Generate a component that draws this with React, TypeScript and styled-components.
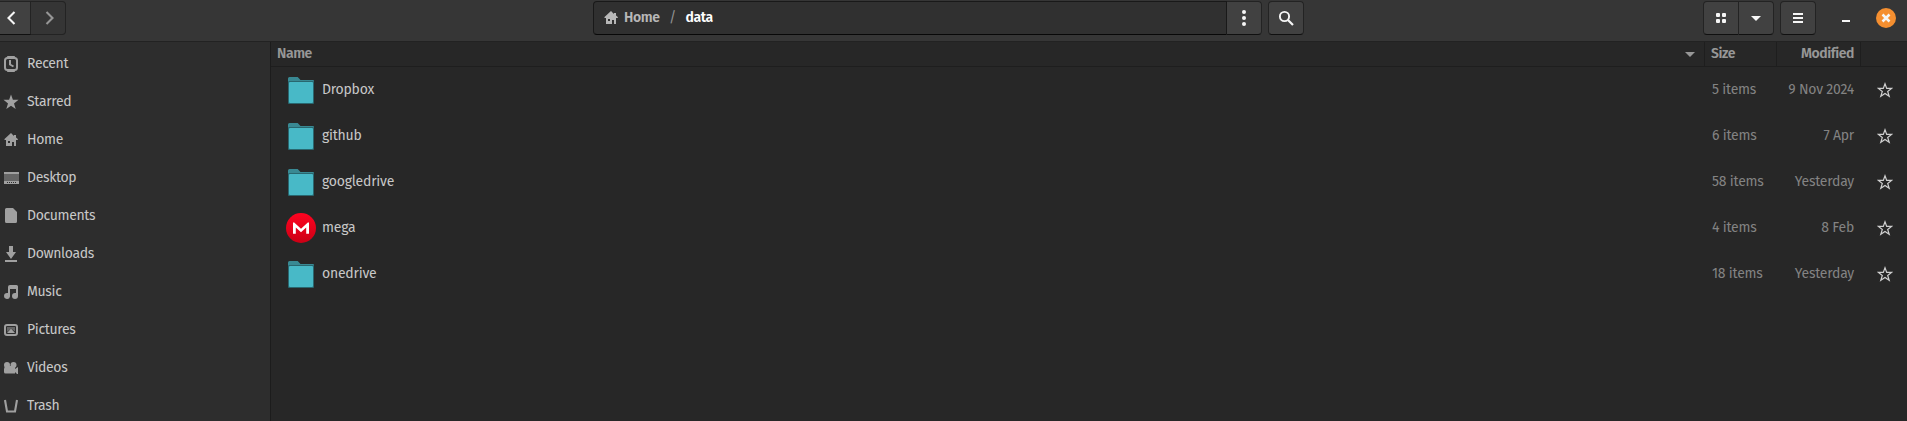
import React from 'react';
import styled, { createGlobalStyle } from 'styled-components';

const GlobalStyle = createGlobalStyle`
  *, *::before, *::after { box-sizing: border-box; }
  body {
    margin: 0;
    background: #272727;
    color: #c8c8c8;
    font-family: 'Fira Sans', 'Noto Sans', sans-serif;
    font-size: 14px;
    letter-spacing: -0.34px;
    line-height: 16px;
    overflow: hidden;
  }
`;

const Window = styled.div`
  display: flex;
  flex-direction: column;
  height: 100vh;
`;

const HeaderBar = styled.header`
  display: flex;
  justify-content: space-between;
  height: 42px;
  padding: 1px 11px 0 0;
  background: #363636;
  border-bottom: 1px solid #222222;
`;

const Group = styled.div<{ $gap?: number }>`
  display: flex;
  align-items: flex-start;
  gap: ${(p) => p.$gap ?? 0}px;
`;

const Button = styled.button<{ $join?: 'left' | 'right'; $flat?: boolean; $width?: number }>`
  display: flex;
  align-items: center;
  justify-content: center;
  width: ${(p) => p.$width ?? 36}px;
  height: 34px;
  padding: 0;
  color: ${(p) => (p.$flat ? '#969696' : '#f6f6f6')};
  background: ${(p) => (p.$flat ? '#353535' : '#414141')};
  border: 1px solid #232323;
  border-bottom-color: ${(p) => (p.$flat ? '#232323' : '#101010')};
  border-left-width: ${(p) => (p.$join === 'right' ? 0 : 1)}px;
  border-radius: ${(p) =>
    p.$join === 'left' ? '4px 0 0 4px' : p.$join === 'right' ? '0 4px 4px 0' : '4px'};
`;

const BackButton = styled(Button)`
  border-left: 0;
  border-radius: 0;
  padding-right: 6px;
`;

const PathBar = styled.nav`
  display: flex;
  align-items: center;
  width: 634px;
  height: 34px;
  padding: 0 10px;
  background: #303030;
  border: 1px solid #191919;
  border-bottom-color: #080808;
  border-radius: 4px 0 0 4px;
  font-weight: 600;
  letter-spacing: -0.4px;
  color: #b7b7b7;
  svg { margin-left: -1px; }
`;

const Crumb = styled.span<{ $current?: boolean }>`
  margin-left: ${(p) => (p.$current ? 0 : 5)}px;
  padding-bottom: 1px;
  color: ${(p) => (p.$current ? '#ffffff' : 'inherit')};
`;

const Slash = styled.span`
  width: 26px;
  text-align: center;
  font-weight: 400;
  color: #929292;
`;

const WindowButton = styled.button`
  display: flex;
  align-items: center;
  justify-content: center;
  width: 20px;
  height: 34px;
  padding: 0;
  border: 0;
  background: none;
  color: #f6f6f6;
`;

const Body = styled.div`
  display: flex;
  flex: 1;
  min-height: 0;
`;

const Sidebar = styled.aside`
  width: 271px;
  padding-top: 3px;
  overflow: hidden;
  background: #2d2d2d;
  border-right: 1px solid #1c1c1c;
`;

const Place = styled.div`
  display: flex;
  align-items: center;
  gap: 8px;
  height: 38px;
  padding-left: 3px;
  color: #a0a0a0;
`;

const PlaceName = styled.span`
  padding-bottom: 1px;
  color: #c8c8c8;
`;

const Files = styled.main`
  flex: 1;
  background: #272727;
`;

const Columns = styled.div`
  display: grid;
  grid-template-columns: 1fr 72px 84px 46px;
`;

const ColumnHeads = styled(Columns)`
  height: 25px;
  border-bottom: 1px solid #1e1e1e;
  font-weight: 600;
  letter-spacing: -0.42px;
  color: #979797;
`;

const Head = styled.div<{ $end?: boolean; $between?: boolean }>`
  display: flex;
  justify-content: ${(p) => (p.$end ? 'flex-end' : p.$between ? 'space-between' : 'flex-start')};
  padding: 4px 6px 0;
  border-right: 1px solid #1e1e1e;
  &:last-child { border-right: 0; }
`;

const FileRow = styled(Columns)`
  height: 46px;
  align-items: center;
  letter-spacing: -0.22px;
`;

const FileName = styled.div`
  display: flex;
  align-items: center;
  padding-left: 15px;
  gap: 6px;
`;

const Label = styled.span`
  padding-bottom: 1px;
`;

const Meta = styled.div<{ $end?: boolean }>`
  padding: 0 7px 1px;
  text-align: ${(p) => (p.$end ? 'right' : 'left')};
  color: #838383;
`;

const StarCell = styled.div`
  display: flex;
  padding-left: 16px;
  color: #cfcfcf;
`;

const Icon = ({ children, size = 16 }: { children: React.ReactNode; size?: number }) => (
  <svg width={size} height={size} viewBox={`0 0 ${size} ${size}`} fill="currentColor">
    {children}
  </svg>
);

const HomeIcon = () => (
  <Icon>
    <path fillRule="evenodd" d="M8 1 1.500 7v1H3v6h6v-4h2v4h2V8h1.800V7L13 5.500V3h-2v1zM5 9h2v2H5z" />
  </Icon>
);

const places: { name: string; icon: React.ReactNode }[] = [
  {
    name: 'Recent',
    icon: (
      <Icon>
        <path d="M4.500 0h7l1 1.500h-9zM4.500 16h7l1-1.500h-9z" />
        <rect x="2" y="2" width="12" height="12" rx="2.500" fill="none" stroke="currentColor" strokeWidth="2" />
        <path d="M7 4v4.500l3.500 2" fill="none" stroke="currentColor" strokeWidth="2" />
      </Icon>
    ),
  },
  {
    name: 'Starred',
    icon: (
      <Icon>
        <path d="m8 .6 1.900 5.100H15.500l-4.500 3.700 1.700 5.600L8 11.800 3.300 15 5 9.400.5 5.700h5.600z" />
      </Icon>
    ),
  },
  { name: 'Home', icon: <HomeIcon /> },
  {
    name: 'Desktop',
    icon: (
      <Icon>
        <path d="M1 2h15v2H1zM1 11h15v3H1z" />
        <path d="M1 4h15v7H1z" opacity=".5" />
        <path d="M4 12h1v1H4zM6 12h1v1H6zM8 12h1v1H8zM10 12h1v1h-1zM12 12h1v1h-1z" fill="#2d2d2d" />
      </Icon>
    ),
  },
  {
    name: 'Documents',
    icon: (
      <Icon>
        <path d="M3.500 0H10l4 4v9.500A1.500 1.500 0 0 1 12.500 15h-9A1.500 1.500 0 0 1 2 13.500v-12A1.500 1.500 0 0 1 3.500 0" />
      </Icon>
    ),
  },
  {
    name: 'Downloads',
    icon: (
      <Icon>
        <path d="M6 0h4v6h3l-5 7-5-7h3zM2 14h12v2H2z" />
      </Icon>
    ),
  },
  {
    name: 'Music',
    icon: (
      <Icon>
        <path d="M5 3a2 2 0 0 1 2-2h6.500A1.500 1.500 0 0 1 15 2.500V12a3 3 0 1 1-3-3h1V5H7v7.500A3 3 0 1 1 4 9h1z" />
      </Icon>
    ),
  },
  {
    name: 'Pictures',
    icon: (
      <Icon>
        <rect x="2" y="3" width="12" height="10" rx="2" fill="none" stroke="currentColor" strokeWidth="2" />
        <path d="M4 5h8v4.500L10 8 8 6.500 4 10z" opacity=".5" />
        <path d="M4 11 8 6.500 12 11z" />
      </Icon>
    ),
  },
  {
    name: 'Videos',
    icon: (
      <Icon>
        <circle cx="4" cy="5" r="3" />
        <circle cx="10.500" cy="5" r="3" />
        <path d="M2 6h10v3l3-2v7h-1l-2-2v1.500H2.500A1.500 1.500 0 0 1 1 12V9z" />
      </Icon>
    ),
  },
  {
    name: 'Trash',
    icon: (
      <Icon>
        <path d="M2 2 4 13.500h8L14 2" fill="none" stroke="currentColor" strokeWidth="2.100" />
      </Icon>
    ),
  },
];

const FolderIcon = () => (
  <svg width="30" height="30" viewBox="0 0 30 30">
    <path d="M2 3.500A1.500 1.500 0 0 1 3.500 2h8.200L14.500 5H27a1 1 0 0 1 1 1v8H2z" fill="#398993" />
    <rect x="2" y="6" width="26" height="23" rx="1" fill="#29676f" />
    <rect x="3" y="7" width="24" height="21" rx="1" fill="#48b9c7" />
  </svg>
);

const MegaIcon = () => (
  <svg width="30" height="30" viewBox="0 0 30 30">
    <defs>
      <linearGradient id="mega" x2="0" y2="1">
        <stop offset="0" stopColor="#ff0320" />
        <stop offset="1" stopColor="#cb0015" />
      </linearGradient>
    </defs>
    <circle cx="15" cy="15" r="15" fill="url(#mega)" />
    <path d="M7 20.800V9.500h1.200L15 15.800l6.800-6.300H23v11.300h-2.800V14.600L15 19.300l-5.200-4.700v6.200z" fill="#fff" />
  </svg>
);

const StarOutline = () => (
  <Icon>
    <path
      d="m8 1.800 1.700 4.600h4.900l-3.900 3 1.500 4.900L8 11.500l-4.200 2.800 1.500-4.900-3.900-3h4.900z"
      fill="none"
      stroke="currentColor"
      strokeWidth="1.200"
    />
  </Icon>
);

const files = [
  { name: 'Dropbox', size: '5 items', modified: '9 Nov 2024' },
  { name: 'github', size: '6 items', modified: '7 Apr' },
  { name: 'googledrive', size: '58 items', modified: 'Yesterday' },
  { name: 'mega', size: '4 items', modified: '8 Feb' },
  { name: 'onedrive', size: '18 items', modified: 'Yesterday' },
];

const HeaderLeft = styled(Group)`
  width: 593px;
`;

const HeaderRight = styled(Group)`
  margin-left: auto;
`;

const WindowControls = styled(Group)`
  margin-left: 14px;
`;

const SearchSpacer = styled(Group)`
  margin-left: 6px;
`;

export default function App() {
  return (
    <Window>
      <GlobalStyle />
      <HeaderBar>
        <HeaderLeft>
          <BackButton $width={31}>
            <Icon>
              <path d="M10.500 2l-6 6 6 6" fill="none" stroke="currentColor" strokeWidth="2.100" />
            </Icon>
          </BackButton>
          <Button $join="right" $flat $width={35}>
            <Icon>
              <path d="m6.500 2 6 6-6 6" fill="none" stroke="currentColor" strokeWidth="2.100" />
            </Icon>
          </Button>
        </HeaderLeft>
        <Group>
          <PathBar>
            <HomeIcon />
            <Crumb>Home</Crumb>
            <Slash>/</Slash>
            <Crumb $current>data</Crumb>
          </PathBar>
          <Button $join="right" $width={35}>
            <Icon>
              <circle cx="8" cy="2" r="2" />
              <circle cx="8" cy="8" r="2" />
              <circle cx="8" cy="14" r="2" />
            </Icon>
          </Button>
          <SearchSpacer>
            <Button>
              <Icon>
                <circle cx="6.500" cy="6.500" r="4.600" fill="none" stroke="currentColor" strokeWidth="1.900" />
                <path d="m10 10 5 5" stroke="currentColor" strokeWidth="2.200" />
              </Icon>
            </Button>
          </SearchSpacer>
        </Group>
        <HeaderRight $gap={6}>
          <Group>
            <Button $join="left">
              <Icon>
                <rect x="3" y="3" width="4" height="4" rx="1" />
                <rect x="9" y="3" width="4" height="4" rx="1" />
                <rect x="3" y="9" width="4" height="4" rx="1" />
                <rect x="9" y="9" width="4" height="4" rx="1" />
              </Icon>
            </Button>
            <Button $join="right" $width={35}>
              <Icon>
                <path d="M3 6h10l-5 5z" />
              </Icon>
            </Button>
          </Group>
          <Button>
            <Icon>
              <path d="M3 3h10v2H3zM3 7h10v2H3zM3 11h10v2H3z" />
            </Icon>
          </Button>
          <WindowControls $gap={20}>
            <WindowButton>
              <Icon>
                <path d="M4 10h8v2H4z" />
              </Icon>
            </WindowButton>
            <WindowButton>
              <Icon size={20}>
                <circle cx="10" cy="10" r="10" fill="#f58f30" />
                <path d="m6.500 6.500 7 7m0-7-7 7" stroke="currentColor" strokeWidth="2.500" />
              </Icon>
            </WindowButton>
          </WindowControls>
        </HeaderRight>
      </HeaderBar>
      <Body>
        <Sidebar>
          {places.map((p) => (
            <Place key={p.name}>
              {p.icon}
              <PlaceName>{p.name}</PlaceName>
            </Place>
          ))}
        </Sidebar>
        <Files>
          <ColumnHeads>
            <Head $between>
              Name
              <Icon>
                <path d="M3 6h10l-5 5z" />
              </Icon>
            </Head>
            <Head>Size</Head>
            <Head $end>Modified</Head>
            <Head />
          </ColumnHeads>
          {files.map((f) => (
            <FileRow key={f.name}>
              <FileName>
                {f.name === 'mega' ? <MegaIcon /> : <FolderIcon />}
                <Label>{f.name}</Label>
              </FileName>
              <Meta>{f.size}</Meta>
              <Meta $end>{f.modified}</Meta>
              <StarCell>
                <StarOutline />
              </StarCell>
            </FileRow>
          ))}
        </Files>
      </Body>
    </Window>
  );
}
